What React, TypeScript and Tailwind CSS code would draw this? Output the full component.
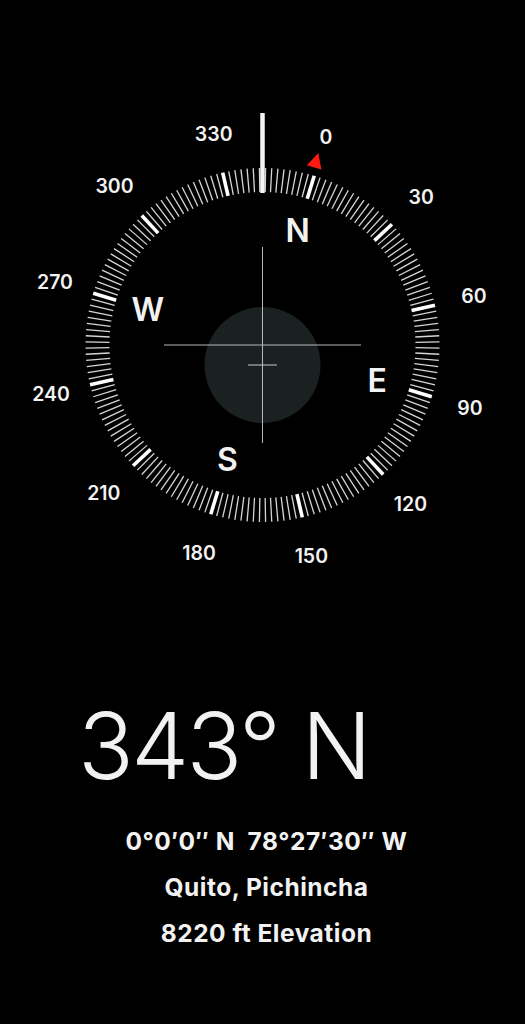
import React from 'react';

const CX = 262.5;
const CY = 345;
const DIAL = 17; // dial rotation, heading 343°

const polar = (deg: number, r: number) => {
    const a = ((deg + DIAL) * Math.PI) / 180;
    return { x: CX + r * Math.sin(a), y: CY - r * Math.cos(a) };
};

const Ticks: React.FC = () => (
    <g>
        {[...Array(180)].map((_, i) => {
            const deg = i * 2;
            const major = deg % 30 === 0;
            const p1 = polar(deg, 153);
            const p2 = polar(deg, 177);
            return (
                <line
                    key={i}
                    x1={p1.x}
                    y1={p1.y}
                    x2={p2.x}
                    y2={p2.y}
                    stroke={major ? '#ffffff' : '#d6d6d6'}
                    strokeWidth={major ? 3.6 : 1.3}
                />
            );
        })}
    </g>
);

const Compass: React.FC = () => {
    const labels = [0, 30, 60, 90, 120, 150, 180, 210, 240, 270, 300, 330];
    const cardinals: [string, number][] = [['N', 0], ['E', 90], ['S', 180], ['W', 270]];

    return (
        <svg width="525" height="600" viewBox="0 0 525 600" className="block">
            <circle cx={CX} cy={365} r={58} fill="#1b2121" />
            <Ticks />
            {labels.map((deg) => {
                const p = polar(deg, 217);
                return (
                    <text
                        key={deg}
                        x={p.x}
                        y={p.y}
                        textAnchor="middle"
                        dominantBaseline="central"
                        fill="#f2f2f2"
                        fontSize="19.5"
                        fontWeight="600"
                        fontFamily="Inter, 'Noto Sans', sans-serif"
                    >
                        {deg}
                    </text>
                );
            })}
            {cardinals.map(([l, deg]) => {
                const p = polar(deg, 120);
                return (
                    <text
                        key={l}
                        x={p.x}
                        y={p.y}
                        textAnchor="middle"
                        dominantBaseline="central"
                        fill="#f2f2f2"
                        fontSize="32"
                        fontWeight="600"
                        fontFamily="Inter, 'Noto Sans', sans-serif"
                    >
                        {l}
                    </text>
                );
            })}
            {/* north marker */}
            <polygon
                points={`${CX},${CY - 200} ${CX - 7.5},${CY - 185} ${CX + 7.5},${CY - 185}`}
                fill="#ff1a12"
                transform={`rotate(${DIAL - 0.8} ${CX} ${CY})`}
            />
            {/* crosshair */}
            <line x1={CX} y1={247} x2={CX} y2={443} stroke="#b8b8b8" strokeWidth="1" />
            <line x1={164} y1={CY} x2={361} y2={CY} stroke="#b8b8b8" strokeWidth="1" />
            <line x1={248} y1={365} x2={277} y2={365} stroke="#c8c8c8" strokeWidth="1" />
            {/* heading bar */}
            <rect x={CX - 2.25} y={113} width="4.5" height="80" fill="#f5f5f5" />
        </svg>
    );
};

export default function App() {
    return (
        <div className="w-[525px] h-[1024px] bg-black text-[#f2f2f2] overflow-hidden" style={{ fontFamily: "Inter, 'Noto Sans', sans-serif" }}>
            <Compass />
            <div className="mt-[100px] pl-[78px] text-[92px] leading-[92px] font-light tracking-[-2.5px]">343° N</div>
            <div className="mt-[26px] flex flex-col items-center pl-2 text-[24.5px] leading-[46px] font-bold tracking-[0.5px]">
                <div className="whitespace-pre">0°0′0″ N  78°27′30″ W</div>
                <div>Quito, Pichincha</div>
                <div>8220 ft Elevation</div>
            </div>
        </div>
    );
}
